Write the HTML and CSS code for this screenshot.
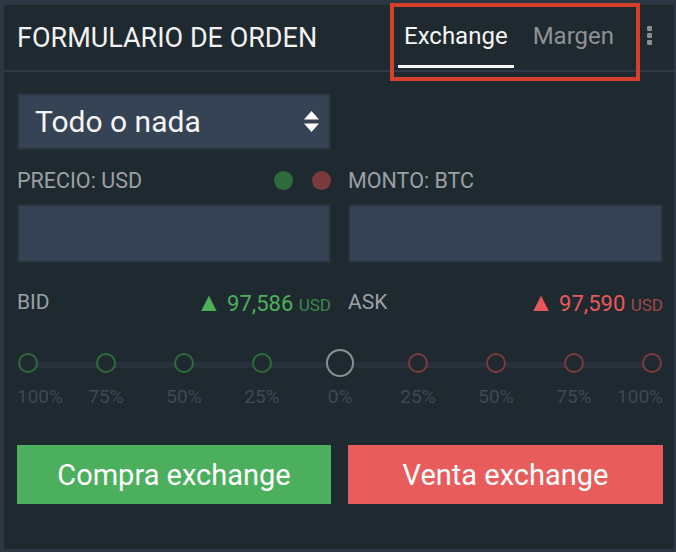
FILE: index.html
```html
<!DOCTYPE html>
<html lang="es">
<head>
    <meta charset="UTF-8">
    <title>Formulario de orden</title>
    <link rel="stylesheet" href="styles.css">
</head>
<body>
    <div class="order-panel">
        <div class="order-header">
            <h1 class="order-title">FORMULARIO DE ORDEN</h1>
            <div class="order-tabs">
                <span class="order-tab active">Exchange</span>
                <span class="order-tab">Margen</span>
            </div>
            <div class="order-menu"><i></i><i></i><i></i></div>
            <div class="highlight-box"></div>
        </div>

        <div class="order-body">
            <div class="order-grid">
                <div class="order-select">
                    <span>Todo o nada</span>
                    <svg width="15" height="21" viewBox="0 0 15 21">
                        <path d="M7.5 0 L15 8.5 L0 8.5 Z" fill="#fff"/>
                        <path d="M0 12.5 L15 12.5 L7.5 21 Z" fill="#fff"/>
                    </svg>
                </div>
                <div></div>

                <div class="field-label">
                    <span>PRECIO: USD</span>
                    <span class="status-dots"><i class="dot-green"></i><i class="dot-red"></i></span>
                </div>
                <div class="field-label"><span>MONTO: BTC</span></div>

                <div class="field-input"></div>
                <div class="field-input"></div>

                <div class="quote-row">
                    <span>BID</span>
                    <span class="quote up"><b>&#9650;</b> 97,586 <small>USD</small></span>
                </div>
                <div class="quote-row">
                    <span>ASK</span>
                    <span class="quote down"><b>&#9650;</b> 97,590 <small>USD</small></span>
                </div>
            </div>

            <div class="amount-slider">
                <div class="slider-track"></div>
                <div class="slider-stop buy first"><i></i><span>100%</span></div>
                <div class="slider-stop buy"><i></i><span>75%</span></div>
                <div class="slider-stop buy"><i></i><span>50%</span></div>
                <div class="slider-stop buy"><i></i><span>25%</span></div>
                <div class="slider-stop zero"><i></i><span>0%</span></div>
                <div class="slider-stop sell"><i></i><span>25%</span></div>
                <div class="slider-stop sell"><i></i><span>50%</span></div>
                <div class="slider-stop sell"><i></i><span>75%</span></div>
                <div class="slider-stop sell last"><i></i><span>100%</span></div>
            </div>

            <div class="order-grid">
                <button class="btn-buy">Compra exchange</button>
                <button class="btn-sell">Venta exchange</button>
            </div>
        </div>
    </div>
</body>
</html>
```

FILE: styles.css
```css
body {
    margin: 0;
    background: #2b3742;
    font-family: Roboto, 'Liberation Sans', sans-serif;
    height: 552px;
    overflow: hidden;
}

.order-panel {
    margin: 5px 2px 0 4px;
    height: 544px;
    background: #1f2930;
}

.order-header {
    position: relative;
    height: 65px;
    border-bottom: 2px solid #2d3944;
    display: flex;
    align-items: center;
    padding-left: 13px;
}

.order-title {
    margin: 0;
    font-size: 27px;
    font-weight: 400;
    color: #f2f2f2;
    flex: 1;
}

.order-tabs {
    display: flex;
    gap: 13px;
    align-self: stretch;
}

.order-tab {
    display: flex;
    align-items: center;
    padding: 0 6px;
    font-size: 24px;
    color: #8d9297;
    border-bottom: 3px solid transparent;
    margin-bottom: 2px;
    padding-top: 2px;
}

.order-tab.active {
    color: #f5f5f5;
    border-bottom-color: #f5f5f5;
}

.order-menu {
    display: flex;
    flex-direction: column;
    gap: 2px;
    margin: 0 22px 4px 27px;
}

.order-menu i {
    width: 5px;
    height: 5px;
    border-radius: 1px;
    background: #868d93;
}

.highlight-box {
    position: absolute;
    left: 386px;
    top: -2px;
    width: 242px;
    height: 70px;
    border: 4px solid #d6402a;
}

.order-body {
    padding: 21px 11px 0 13px;
}

.order-grid {
    display: grid;
    grid-template-columns: 314px 315px;
    column-gap: 17px;
}

.order-select {
    height: 53px;
    border: 2px solid #28323c;
    background: #364354;
    display: flex;
    align-items: center;
    justify-content: space-between;
    padding: 0 10px 0 16px;
    font-size: 30px;
    color: #f5f5f5;
}

.field-label {
    height: 48px;
    padding-top: 6px;
    display: flex;
    align-items: center;
    justify-content: space-between;
    font-size: 21.5px;
    color: #9ba0a5;
}

.status-dots {
    display: flex;
    gap: 19px;
}

.status-dots i {
    width: 19px;
    height: 19px;
    border-radius: 50%;
}

.dot-green { background: #2f6a3d; }
.dot-red { background: #7b3b3d; }

.field-input {
    height: 55px;
    border: 2px solid #28323c;
    background: #364354;
}

.quote-row {
    height: 78px;
    display: flex;
    align-items: center;
    justify-content: space-between;
    font-size: 21px;
    color: #9ba0a5;
}

.quote {
    font-size: 22px;
}

.quote b {
    font-weight: 400;
    font-size: 26px;
    line-height: 1;
}

.quote small {
    font-size: 17px;
}

.quote.up { color: #4caf5a; }
.quote.up small { color: #3a8848; }
.quote.down { color: #e8585a; }
.quote.down small { color: #a2484b; }

.amount-slider {
    position: relative;
    display: flex;
    justify-content: space-between;
    padding-top: 10px;
    height: 94px;
}

.slider-track {
    position: absolute;
    left: 10px;
    right: 10px;
    top: 21px;
    height: 6px;
    background: #26313b;
}

.slider-stop {
    position: relative;
    width: 22px;
    display: flex;
    flex-direction: column;
    align-items: center;
    font-size: 19px;
    color: #3e4953;
}

.slider-stop i {
    width: 16px;
    height: 16px;
    margin: 2px 0;
    border: 2px solid;
    border-radius: 50%;
    background: #1f2930;
}

.slider-stop span {
    margin-top: 10px;
    white-space: nowrap;
}

.slider-stop.first { align-items: flex-start; }
.slider-stop.last { align-items: flex-end; }
.slider-stop.first i { margin-left: 1px; }
.slider-stop.last i { margin-right: 1px; }

.slider-stop.buy i { border-color: #2f6c3c; }
.slider-stop.sell i { border-color: #7e3a3c; }

.slider-stop.zero i {
    width: 24px;
    height: 24px;
    margin: -2px 0;
    border-color: #8a9096;
}

.order-grid button {
    height: 59px;
    border: none;
    font-family: Roboto, sans-serif;
    font-size: 29px;
    color: #fff;
}

.btn-buy { background: #4caf5d; }
.btn-sell { background: #e95c5c; }
```
